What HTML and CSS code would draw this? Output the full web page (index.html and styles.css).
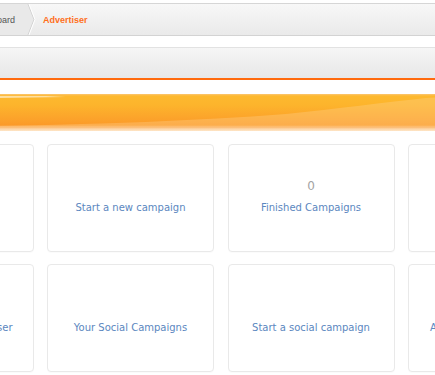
FILE: index.html
```html
<!DOCTYPE html>
<html lang="en">
<head>
<meta charset="utf-8">
<title>Advertiser</title>
<link rel="stylesheet" href="styles.css">
</head>
<body>
<div class="page">
  <nav class="breadcrumb">
    <a class="crumb crumb-first" href="#">Dashboard</a>
    <svg class="crumb-sep" width="12" height="31" viewBox="0 0 12 31" aria-hidden="true">
      <polygon points="0,0 5,0 11,15.5 5,31 0,31" fill="#e9e9e9"/>
      <polyline points="4,0 10,15.5 4,31" fill="none" stroke="#d2d2d2" stroke-width="1"/>
      <polyline points="5,0 11,15.5 5,31" fill="none" stroke="#ffffff" stroke-width="1"/>
    </svg>
    <span class="crumb crumb-active">Advertiser</span>
  </nav>

  <div class="toolbar"></div>

  <div class="banner">
    <svg class="banner-wave" width="900" height="37" viewBox="0 0 900 37" preserveAspectRatio="none" aria-hidden="true">
      <path d="M0,33 L134,32 C230,30 330,27 420,20 C470,15 520,8 560,4 C620,1 760,1 900,1 L900,33 Z" fill="rgba(255,214,150,0.33)"/>
      <path d="M134,2 L180,2 L200,3 L134,4 Z" fill="rgba(255,255,255,0.55)"/>
    </svg>
  </div>

  <div class="cards">
    <a class="card" href="#"><span class="card-num">0</span><span class="card-label">Active Campaigns</span></a>
    <a class="card" href="#"><span class="card-num"></span><span class="card-label">Start a new campaign</span></a>
    <a class="card" href="#"><span class="card-num">0</span><span class="card-label">Finished Campaigns</span></a>
    <a class="card" href="#"><span class="card-num">0</span><span class="card-label">Paused Campaigns</span></a>
    <a class="card" href="#"><span class="card-num"></span><span class="card-label">Campaigns as Advertiser</span></a>
    <a class="card" href="#"><span class="card-num"></span><span class="card-label">Your Social Campaigns</span></a>
    <a class="card" href="#"><span class="card-num"></span><span class="card-label">Start a social campaign</span></a>
    <a class="card" href="#"><span class="card-num"></span><span class="card-label">Active Social Campaigns</span></a>
  </div>
</div>
</body>
</html>
```

FILE: styles.css
```css
html, body {
  margin: 0;
  padding: 0;
  background: #ffffff;
  overflow: hidden;
}

body {
  font-family: "DejaVu Sans", Verdana, sans-serif;
  width: 435px;
  height: 375px;
}

.page {
  width: 900px;
  margin-left: -134px;
  padding-top: 3px;
}

/* Breadcrumb */
.breadcrumb {
  display: flex;
  align-items: stretch;
  height: 31px;
  border-top: 1px solid #d6d6d6;
  border-bottom: 1px solid #d3d3d3;
  background: linear-gradient(to bottom, #f8f8f8 0%, #efefef 60%, #eaeaea 100%);
  font-family: "Liberation Sans", Arial, sans-serif;
  font-size: 9px;
}

.crumb {
  display: flex;
  align-items: center;
  text-decoration: none;
}

.crumb-first {
  padding: 0 10px 0 105px;
  background: #e9e9e9;
  color: #555555;
}

.crumb-sep {
  display: block;
  flex: none;
  margin-left: -1px;
}

.crumb-active {
  padding-left: 7px;
  color: #ff6f1c;
  font-weight: bold;
}

/* Grey toolbar with orange underline */
.toolbar {
  margin-top: 11px;
  height: 30px;
  border-top: 1px solid #e2e2e2;
  border-bottom: 2px solid #ff6a0e;
  background: linear-gradient(to bottom, #f6f6f6 0%, #eeeeee 50%, #e8e8e8 100%);
}

/* Orange banner */
.banner {
  position: relative;
  margin-top: 14px;
  height: 37px;
  overflow: hidden;
  background: linear-gradient(to bottom,
    #fbc673 0px, #fdb92f 2px, #fdb42c 30%, #fca52b 62%, #fb9a29 84%,
    #fcb66a 89%, #fdd3a2 94%, #fee6c8 100%);
}

.banner-wave {
  position: absolute;
  left: 0;
  top: 0;
}

/* Cards */
.cards {
  display: grid;
  grid-template-columns: repeat(4, 167px);
  column-gap: 13.5px;
  row-gap: 12px;
  margin-top: 13px;
  margin-left: 0.5px;
}

.card {
  box-sizing: border-box;
  height: 108px;
  display: flex;
  flex-direction: column;
  align-items: center;
  padding-top: 33px;
  border: 1px solid #e9e9e9;
  border-radius: 4px;
  background: #ffffff;
  box-shadow: 0 1px 1px rgba(0, 0, 0, 0.02);
  text-decoration: none;
}

.card-num {
  height: 16px;
  line-height: 16px;
  font-size: 12px;
  color: #a3a3a3;
}

.card-label {
  margin-top: 7px;
  line-height: 13px;
  font-size: 10px;
  color: #5b87c0;
  white-space: nowrap;
}
```
